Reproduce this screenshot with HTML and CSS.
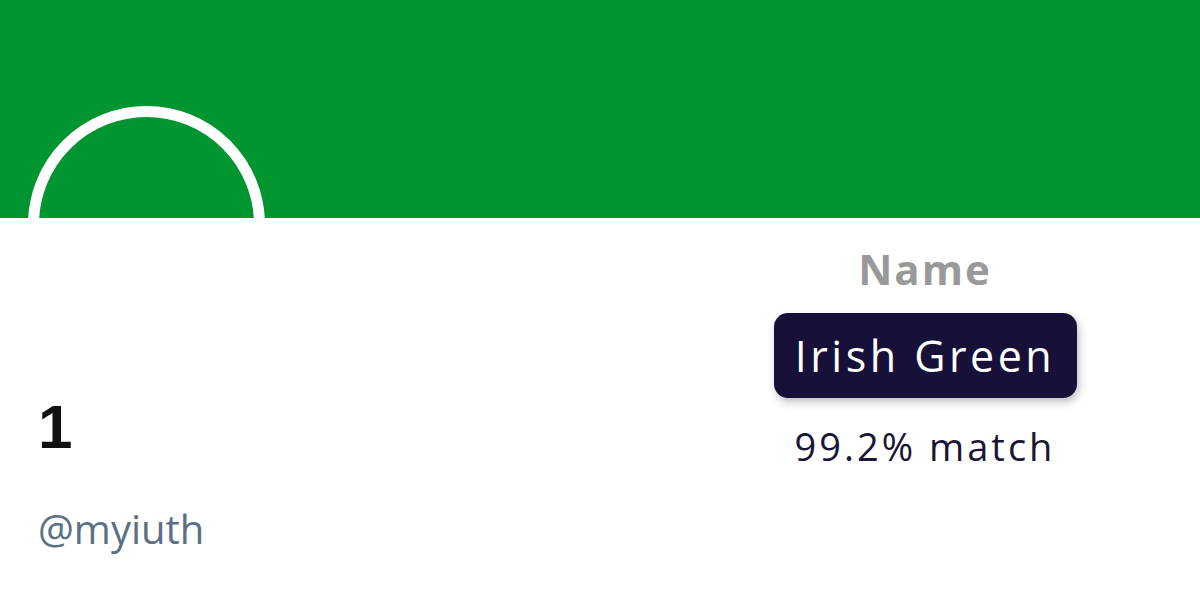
FILE: index.html
```html
<!DOCTYPE html>
<html>
<head>
<meta charset="utf-8">
<link rel="stylesheet" href="styles.css">
</head>
<body>
<div class="banner">
  <div class="avatar"></div>
</div>
<div class="content">
  <div class="left">
    <div class="count">1</div>
    <div class="handle">@myiuth</div>
  </div>
  <div class="right">
    <div class="panel-bg"></div>
    <div class="label">Name</div>
    <div class="badge">Irish Green</div>
    <div class="match">99.2% match</div>
  </div>
</div>
</body>
</html>
```
FILE: styles.css
```css
html, body {
  margin: 0;
  padding: 0;
  background: #ffffff;
  width: 1200px;
  height: 594px;
  overflow: hidden;
}
.banner {
  position: relative;
  height: 218px;
  background: #009530;
  overflow: hidden;
}
.avatar {
  position: absolute;
  left: 28px;
  top: 106px;
  width: 215px;
  height: 215px;
  border: 11px solid #ffffff;
  border-radius: 50%;
}
.content {
  display: flex;
  height: 376px;
}
.left {
  width: 725px;
  box-sizing: border-box;
  padding-left: 38px;
  padding-top: 178px;
  font-family: "Liberation Sans", Arial, sans-serif;
}
.count {
  font-weight: 700;
  font-size: 62px;
  line-height: 62px;
  color: #111111;
}
.handle {
  margin-top: 46px;
  font-family: "Open Sans", sans-serif;
  font-size: 40px;
  line-height: 50px;
  color: #5b7083;
}
.right {
  position: relative;
  width: 400px;
  display: flex;
  flex-direction: column;
  align-items: center;
  padding-top: 26px;
  font-family: "Open Sans", sans-serif;
}
.panel-bg {
  position: absolute;
  left: 108px;
  top: 17px;
  width: 335px;
  height: 263px;
  background: #fcfdfd;
  z-index: -1;
}
.label {
  font-size: 42px;
  font-weight: 700;
  color: #999999;
  line-height: 50px;
  letter-spacing: 2px;
}
.badge {
  margin-top: 19px;
  background: #17113a;
  color: #ffffff;
  border-radius: 14px;
  width: 303px;
  height: 85px;
  box-sizing: border-box;
  display: flex;
  align-items: center;
  justify-content: center;
  font-size: 43px;
  letter-spacing: 3.5px;
  box-shadow: 2px 4px 8px rgba(0, 0, 0, 0.25);
}
.match {
  margin-top: 24px;
  font-size: 38px;
  line-height: 48px;
  color: #1a1535;
  letter-spacing: 3px;
}
```
